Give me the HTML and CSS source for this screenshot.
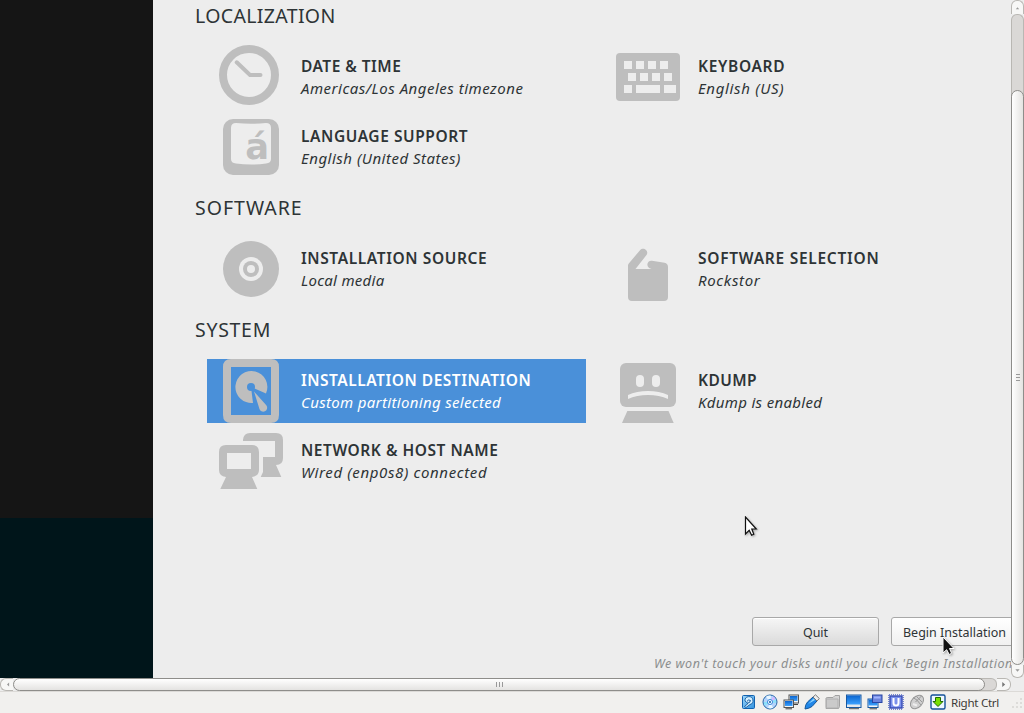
FILE: index.html
```html
<!DOCTYPE html>
<html lang="en">
<head>
<meta charset="utf-8">
<title>Installation Summary</title>
<link rel="stylesheet" href="styles.css">
</head>
<body>
<div class="window">
  <div class="view">
    <aside class="sidebar"><div class="sidebar-top"></div><div class="sidebar-bottom"></div></aside>
    <main class="hub">
      <h2 class="w-loc">LOCALIZATION</h2>
      <section class="spokes">
        <div class="spoke">
          <svg class="icon" viewBox="0 0 64 64"><circle cx="30" cy="30" r="26" fill="none" stroke="#bebebe" stroke-width="8"/><path d="M17.7 17.3L31 30H41.5" fill="none" stroke="#bebebe" stroke-width="4" stroke-linecap="round"/></svg>
          <div class="label"><h3 class="w-date">DATE &amp; TIME</h3><p class="w-date2">Americas/Los Angeles timezone</p></div>
        </div>
        <div class="spoke">
          <svg class="icon" viewBox="0 0 64 64"><rect y="8" width="64" height="48" rx="4"/><g fill="#ededed"><path d="M8 16h8v8H8zM20 16h8v8h-8zM32 16h8v8h-8zM44 16h8v8h-8zM12 28h8v8h-8zM24 28h8v8h-8zM36 28h8v8h-8zM48 28h8v8h-8zM8 40h8v8H8zM20 40h24v8H20zM48 40h12v8H48z"/></g></svg>
          <div class="label"><h3 class="w-key">KEYBOARD</h3><p class="w-key2">English (US)</p></div>
        </div>
        <div class="spoke">
          <svg class="icon" viewBox="0 0 64 64"><rect x="4" y="4" width="56" height="56" rx="10"/><path fill="#ededed" d="M17 8Q32 9.500 47 8Q52 8 52 13V44Q52 48 47 48.500Q32 50.500 17 48.500Q12 48 12 44V13Q12 8 17 8z"/><text class="letter" transform="translate(26.200 44) scale(.98 1)">á</text></svg>
          <div class="label"><h3 class="w-lang">LANGUAGE SUPPORT</h3><p class="w-lang2">English (United States)</p></div>
        </div>
      </section>
      <h2 class="w-soft">SOFTWARE</h2>
      <section class="spokes">
        <div class="spoke">
          <svg class="icon" viewBox="0 0 64 64"><circle cx="32" cy="32" r="28"/><circle cx="32" cy="32" r="12" fill="#ededed"/><circle cx="32" cy="32" r="8"/><circle cx="32" cy="32" r="4" fill="#ededed"/></svg>
          <div class="label"><h3 class="w-src">INSTALLATION SOURCE</h3><p class="w-src2">Local media</p></div>
        </div>
        <div class="spoke">
          <svg class="icon" viewBox="0 0 64 64"><path d="M12 60V28.500Q12 27.500 12.800 26.500L24 13.200C26 11 28.500 11.500 30 13C31.600 14.600 31.700 16.500 30.300 18.200L19.500 32H35.500C32.500 31.500 31.300 29.500 31.400 27.300C31.500 25 33.500 23.300 36 23.700L48.500 25.700Q52 26.500 52 30V60Q52 64 48 64H16Q12 64 12 60z"/></svg>
          <div class="label"><h3 class="w-sel">SOFTWARE SELECTION</h3><p class="w-sel2">Rockstor</p></div>
        </div>
      </section>
      <h2 class="w-sys">SYSTEM</h2>
      <section class="spokes">
        <div class="spoke selected">
          <svg class="icon" viewBox="0 0 64 64"><path fill-rule="evenodd" d="M12 0H52Q60 0 60 8V56Q60 64 52 64H12Q4 64 4 56V8Q4 0 12 0zM12 8V56H52V8z"/><path d="M32 28L34 43.900A16 16 0 1 1 47 34.500z"/><circle cx="32" cy="28" r="4" fill="#4a90d9"/><path d="M35 32.500L47.300 46.200A4 4 0 1 1 40.300 49.600z"/></svg>
          <div class="label"><h3 class="w-dest">INSTALLATION DESTINATION</h3><p class="w-dest2">Custom partitioning selected</p></div>
        </div>
        <div class="spoke">
          <svg class="icon" viewBox="0 0 64 64"><rect x="4" y="4" width="56" height="44" rx="6"/><path d="M11.300 52H52.500L57.700 64H6z"/><g fill="#ededed"><rect x="20" y="16" width="8" height="12" rx="4"/><rect x="36" y="16" width="8" height="12" rx="4"/><path d="M12 36C23 30.700 41 30.700 52 36V40C41 34.700 23 34.700 12 40z"/></g></svg>
          <div class="label"><h3 class="w-kd">KDUMP</h3><p class="w-kd2">Kdump is enabled</p></div>
        </div>
        <div class="spoke">
          <svg class="icon" viewBox="0 0 64 64"><path d="M24 12V11Q24.500 4 31 4H57Q64 4 64 11V29Q64 36 57 36L62.300 48H41.700L44 43V28H56V12z"/><path fill-rule="evenodd" d="M7 16H33Q40 16 40 23V41Q40 47 33 48L38.300 60H1.300L7 48Q0 47 0 41V23Q0 16 7 16zM8 24V40H32V24z"/></svg>
          <div class="label"><h3 class="w-net">NETWORK &amp; HOST NAME</h3><p class="w-net2">Wired (enp0s8) connected</p></div>
        </div>
      </section>
      <footer class="actions">
        <div class="buttons"><button class="btn">Quit</button><button class="btn hover">Begin Installation</button></div>
        <p class="note">We won't touch your disks until you click 'Begin Installation'.</p>
      </footer>
    </main>
    <svg class="pointer guest" viewBox="0 0 14 22"><path d="M1.500 1V18L5.200 14.300L7.600 19.300L9.800 18.300L7.800 13H12.300z" fill="#fff" stroke="#111" stroke-width="1.200"/></svg>
    <svg class="pointer host" viewBox="0 0 14 22"><path d="M1 1V17L4.700 13.700L7.200 18.500L9.600 17.300L7.500 12.500H12z" fill="#111" stroke="#fff" stroke-width="1"/></svg>
  </div>
  <div class="vscroll">
    <div class="arrow up"><svg viewBox="0 0 13 14"><path d="M4.500 9L6.500 6.800L8.500 9z"/></svg></div>
    <div class="trough"></div>
    <div class="thumb"><i></i><i></i><i></i></div>
    <div class="arrow down"><svg viewBox="0 0 13 12"><path d="M4 4H9L6.500 7z"/></svg></div>
  </div>
  <div class="hscroll">
    <div class="arrow left"><svg viewBox="0 0 13 13"><path d="M9 4V9L6.500 6.500z"/></svg></div>
    <div class="thumb"><i></i><i></i><i></i></div>
    <div class="trough"></div>
    <div class="arrow right"><svg viewBox="0 0 14 13"><path d="M5.500 3.500V9.500L9 6.500z"/></svg></div>
  </div>
  <div class="corner"></div>
  <div class="status">
    <svg viewBox="0 0 16 16"><defs><linearGradient id="b" x1="0" y1="0" x2="0" y2="1"><stop offset="0" stop-color="#0b65cf"/><stop offset="1" stop-color="#3da2ff"/></linearGradient><linearGradient id="l" x1="0" y1="0" x2="1" y2="1"><stop offset="0" stop-color="#9ed7fb"/><stop offset="1" stop-color="#2f91df"/></linearGradient></defs><rect x="1.500" y="1.500" width="12" height="13" rx="1" fill="url(#l)" stroke="#1162b0"/><path d="M4 7a4 4 0 1 1 5 3.500L5 13.500L3.500 12.500L7 9.500z" fill="#d5f0ff" stroke="#11579c" stroke-width=".9"/><path d="M6 7.300Q7.500 5 9.500 6.500Q9 9 6.500 9.200" fill="none" stroke="#11579c"/></svg>
    <svg viewBox="0 0 16 16"><circle cx="8" cy="8" r="7" fill="#b4d3fb" stroke="#2366a8"/><path d="M8 8L4 2.800A6 6 0 0 1 9 1.700zM8 8L11 13.700A6 6 0 0 1 6 14z" fill="#e9f7ff"/><path d="M8 8L13.500 5A6 6 0 0 1 14 9zM8 8L2 8A6 6 0 0 0 3 12z" fill="#8be1fa"/><path d="M8 8L11 2.500A6 6 0 0 1 13.500 5z" fill="#d4b8ff"/><circle cx="8" cy="8" r="2.500" fill="#fff" stroke="#3487dc"/><circle cx="8" cy="8" r="1" fill="#0759a7"/></svg>
    <svg viewBox="0 0 16 16"><rect x="6" y="1" width="9.500" height="8" fill="#f4f4f4" stroke="#555"/><rect x="7" y="2" width="7.500" height="5" fill="url(#b)"/><path d="M11 10.500h4" stroke="#444"/><rect x="1" y="6" width="9.500" height="7.500" fill="#f4f4f4" stroke="#555"/><rect x="2" y="7" width="7.500" height="5" fill="url(#b)"/><path d="M2.500 14.800h6.500" stroke="#444"/></svg>
    <svg viewBox="0 0 16 16"><path d="M1 15Q1 11 3.500 8L9 3L13 7L8 12.500Q5 14.500 1 15z" fill="#2187e8" stroke="#135699"/><path d="M4 10L9.500 4.500L11 6z" fill="#8ed5ff"/><path d="M9 3L11.500 .8L15.300 4.500L13 7z" fill="#eee" stroke="#777"/></svg>
    <svg viewBox="0 0 16 16"><path d="M1 13.500V4L3 3.500H8L10 1.500H14.500V12.500L13.500 14.500H1z" fill="#d4d4d4" stroke="#a1a1a1"/><path d="M1.500 5H13V14H1.500z" fill="#cacaca" stroke="#b0b0b0"/></svg>
    <svg viewBox="0 0 16 16"><rect x=".5" y="1" width="14.500" height="12.500" fill="#e4e8ec" stroke="#1759a2"/><rect x="1" y="1.500" width="13.500" height="9" fill="url(#b)"/><path d="M3 14.700H13" stroke="#555"/></svg>
    <svg viewBox="0 0 16 16"><rect x="1" y="5" width="10" height="8.500" fill="#f4f4f4" stroke="#1759a2"/><rect x="1.500" y="5.500" width="9" height="6" fill="url(#b)"/><path d="M2.500 14.800H10" stroke="#444"/><rect x="5.500" y="1" width="9.500" height="7.500" fill="#6d84dd" stroke="#2846a4"/><path d="M7 2.500h6.500v2H7z" fill="#9fb3ff"/></svg>
    <svg viewBox="0 0 16 16"><rect x="2" y="2" width="12" height="12" fill="#7b91ec" stroke="#3045af" stroke-width="1.300"/><path d="M1 .8H15M1 15.200H15M.8 1V15M15.200 1V15" fill="none" stroke="#4058c4" stroke-width="1" stroke-dasharray="1 1"/><path d="M5.500 4V9Q5.500 11.500 8 11.500T10.500 9V4" fill="none" stroke="#fff" stroke-width="2"/></svg>
    <svg viewBox="0 0 16 16"><ellipse cx="8" cy="8" rx="5.300" ry="7.800" transform="rotate(43 8 8)" fill="#d0d0d0" stroke="#989898"/><path d="M4 3.500Q8 5 12 11M6.500 8L12.500 2M7.500 2.500L13 8" fill="none" stroke="#999"/><path d="M4 10L8 11.500" stroke="#eee" stroke-width="2"/></svg>
    <svg viewBox="0 0 16 16"><rect x="1" y="1" width="14" height="14" rx="1.500" fill="#edf7ff" stroke="#155199" stroke-width="1.400"/><path d="M5.500 3.500H10.500V7.500H13L8 12.500L3 7.500H5.500z" fill="#78df00" stroke="#216a00"/></svg>
    <span class="hostkey">Right Ctrl</span>
    <svg class="grip" viewBox="0 0 14 14"><path d="M10 1h2v2h-2zM6 5h2v2H6zM10 5h2v2h-2zM2 9h2v2H2zM6 9h2v2H6zM10 9h2v2h-2z" fill="#dddcd9"/></svg>
  </div>
</div>
</body>
</html>
```
FILE: styles.css
```css
* { box-sizing: border-box; }
body { margin: 0; overflow: hidden; font-family: "Noto Sans", "Open Sans", sans-serif; color: #2e3436; }
h2, h3, p { margin: 0; white-space: nowrap; }
.window { width: 1024px; height: 713px; display: grid; grid-template-columns: 1011px 13px; grid-template-rows: 678px 13px 22px; background: #f1f0ee; overflow: hidden; }
.view { position: relative; display: flex; overflow: hidden; background: #ededed; }
.sidebar { width: 153px; flex: none; display: flex; flex-direction: column; }
.sidebar-top { height: 518px; background: #151515; }
.sidebar-bottom { flex: 1; background: #00151a; }
.hub { width: 858px; flex: none; padding-left: 42px; display: flex; flex-direction: column; }
h2 { height: 58px; padding-top: 15px; font-size: 19.5px; line-height: 28px; font-weight: 400; }
h2:first-child { height: 45px; padding-top: 0; line-height: 32px; }
.spokes { display: grid; grid-template-columns: 379px 379px; grid-auto-rows: 64px; gap: 6px 18px; padding-left: 12px; }
.spoke { display: flex; gap: 18px; padding-left: 12px; }
.selected { background: #4a90d9; color: #fff; }
.icon { width: 64px; height: 64px; flex: none; fill: #bebebe; }
.letter { font: bold 36px "DejaVu Sans", sans-serif; fill: #bebebe; }
.label { padding-top: 10px; }
h3 { font-size: 15.5px; line-height: 23px; font-weight: 600; }
p { font-size: 15px; line-height: 22px; font-style: italic; }
.label p { margin-top: -1px; }

/* tracking per label */
.w-loc { letter-spacing: .35px; }
.w-soft { letter-spacing: 1px; }
.w-sys { letter-spacing: .7px; }
.w-date { letter-spacing: .48px; }
.w-date2 { letter-spacing: .51px; }
.w-key, .w-key2, .w-sel2 { letter-spacing: .66px; }
.w-lang { letter-spacing: .57px; }
.w-lang2 { letter-spacing: .5px; }
.w-src { letter-spacing: .6px; }
.w-src2 { letter-spacing: .28px; }
.w-sel { letter-spacing: .73px; }
.w-dest { letter-spacing: .52px; }
.w-dest2 { letter-spacing: .33px; }
.w-kd { letter-spacing: .4px; }
.w-kd2 { letter-spacing: .32px; }
.w-net { letter-spacing: .54px; }
.w-net2 { letter-spacing: .64px; }

.actions { margin-top: auto; height: 61px; }
.buttons { display: flex; gap: 12px; padding-left: 557px; }
.btn { width: 127px; height: 29px; flex: none; padding: 0; border: 1px solid #a8a8a8; border-radius: 3px; background: linear-gradient(#f6f6f6, #dadada); box-shadow: inset 0 1px #fff; font: 12.5px/29px "Noto Sans", sans-serif; color: #2e3436; white-space: nowrap; }
.hover { background: linear-gradient(#fff, #f0f0f0); }
.note { padding: 7px 0 0 459px; font-size: 12.5px; line-height: 22px; letter-spacing: .53px; color: #8b8d8e; }
.pointer { position: absolute; width: 14px; height: 22px; filter: drop-shadow(1px 1px 1px rgba(0,0,0,.3)); }
.guest { left: 744px; top: 516px; }
.host { left: 942px; top: 636px; }
.vscroll { display: flex; flex-direction: column; background: #ededed; }
.hscroll { display: flex; background: #ededed; }
.arrow { border: 1px solid #b9b7b3; background: #f7f7f6; flex: none; display: flex; }
.arrow svg { width: 100%; height: 100%; fill: #777; }
.up { height: 14px; border-radius: 6px 6px 0 0; border-bottom: 0; }
.down { height: 13px; border-radius: 0 0 6px 6px; border-top: 0; }
.left { width: 13px; border-radius: 6px 0 0 6px; border-right: 0; }
.right { width: 14px; border-radius: 0 6px 6px 0; border-left: 0; }
.left svg, .down svg, .up svg { fill: #999; }
.vscroll .trough { height: 83px; margin-bottom: -7px; background: #dad8d6; border: 1px solid #b9b7b3; border-bottom: 0; border-radius: 6px 6px 0 0; }
.thumb { position: relative; flex: none; display: flex; align-items: center; justify-content: center; gap: 2px; border: 1px solid #8e8d8a; border-radius: 7px; }
.vscroll .thumb { height: 575px; flex-direction: column; background: linear-gradient(90deg, #fff, #e4e3e1); }
.hscroll .thumb { width: 972px; background: linear-gradient(#fff, #e4e3e1); }
.hscroll .trough { width: 20px; margin-left: -8px; background: #dad8d6; border: 1px solid #b9b7b3; border-left: 0; border-radius: 0 6px 6px 0; }
.vscroll i { width: 4px; height: 1px; background: #999; }
.hscroll i { width: 1px; height: 5px; background: #999; }
.corner { background: #ededed; }
.status { grid-column: 1 / 3; display: flex; gap: 5px; padding: 2px 0 0 741px; border-top: 1px solid #dcdad7; background: #f1f0ee; }
.status svg { width: 16px; height: 16px; flex: none; }
.hostkey { width: 55px; font-size: 11.6px; line-height: 17px; letter-spacing: -.3px; color: #3c3b37; white-space: nowrap; }
.status .grip { width: 14px; height: 14px; margin-top: 3px; }
```
